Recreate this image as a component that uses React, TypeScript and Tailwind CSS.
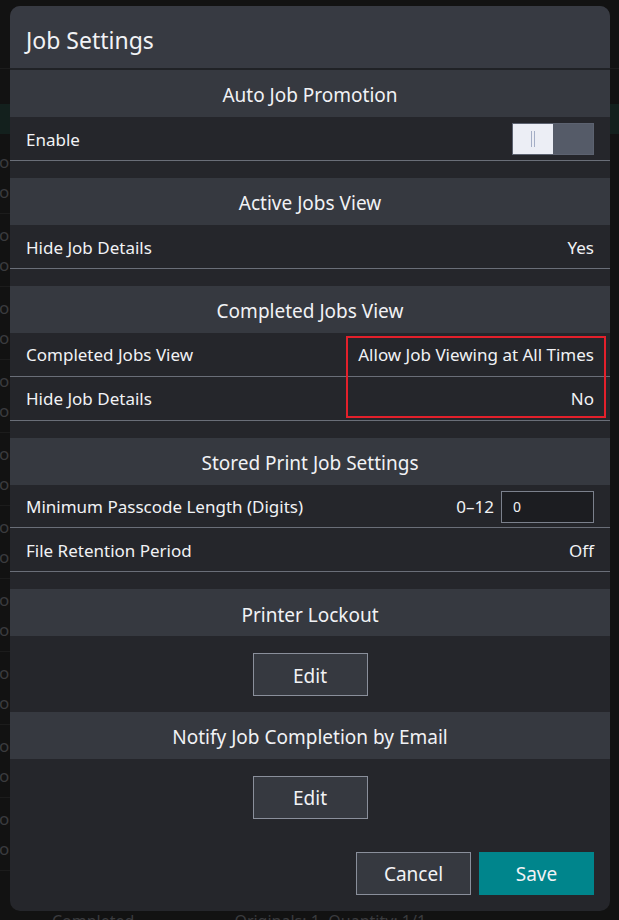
import React from "react";

const font = { fontFamily: '"Segoe UI", "Noto Sans", "Open Sans", sans-serif' };

function SectionHeader({ title }: { title: string }) {
  return (
    <div className="h-[47px] bg-[#363940] flex items-center justify-center pt-[4px] text-[19px] text-[#f1f2f5]">
      {title}
    </div>
  );
}

function Row({ label, children }: { label: string; children?: React.ReactNode }) {
  return (
    <div className="h-[44px] border-b border-[#6a6e78] px-4 flex items-center justify-between pt-[2px] text-[17px] text-[#f1f2f5]">
      <span>{label}</span>
      <div className="flex items-center">{children}</div>
    </div>
  );
}

function Spacer() {
  return <div className="h-[17px]" />;
}

function EditArea() {
  return (
    <div className="h-[76px] flex items-center justify-center">
      <button className="w-[115px] h-[43px] bg-[#363940] border border-[#8a8f9b] pt-[3px] text-[19px] text-[#f1f2f5]">
        Edit
      </button>
    </div>
  );
}

function Toggle() {
  return (
    <div className="w-[82px] h-[32px] flex border border-[#5c6270] bg-[#555b68]">
      <div className="w-[40px] h-full bg-[#eceef5] flex items-center justify-center gap-[2px]">
        <div className="w-px h-[16px] bg-[#a4aec6]" />
        <div className="w-px h-[16px] bg-[#a4aec6]" />
      </div>
    </div>
  );
}

function BgRow() {
  return (
    <div className="h-[73px] w-[10px] overflow-hidden border-b border-[#1c1c1c] flex flex-col justify-center gap-[8px] text-[17px] leading-[22px] text-[#3a3b3e]">
      <span className="block w-[10px] overflow-hidden whitespace-nowrap">
        <span className="inline-block ml-[-1px]">oc</span>
      </span>
      <span className="block w-[10px] overflow-hidden whitespace-nowrap">
        <span className="inline-block ml-[-1px]">or</span>
      </span>
    </div>
  );
}

export default function App() {
  return (
    <div className="relative w-[619px] h-[920px] overflow-hidden bg-[#121212]" style={font}>
      {/* background page */}
      <div className="flex flex-col">
        <div className="h-[69px] border-b border-[#1c1c1c]" />
        <div className="h-[35px]" />
        <div className="h-[30px] bg-[#13201d]" />
        <div className="h-[7px]" />
        <BgRow />
        <BgRow />
        <BgRow />
        <BgRow />
        <BgRow />
        <BgRow />
        <BgRow />
        <BgRow />
        <BgRow />
        <BgRow />
      </div>
      <div className="absolute left-[52px] top-[913px] w-[420px] flex text-[16px] leading-none text-[#3a3b3e] whitespace-nowrap">
        <span>Completed</span>
        <span className="ml-[100px]">Originals: 1, Quantity: 1/1</span>
      </div>

      {/* modal */}
      <div className="absolute left-[10px] top-[6px] w-[600px] h-[905px] rounded-[10px] overflow-hidden bg-[#25262b] flex flex-col">
        <div className="h-[62px] bg-[#373a42] px-4 pt-[6px] flex items-center text-[23px] text-[#f1f2f5]">
          Job Settings
        </div>
        <div className="h-[2px] bg-[#202226]" />

        <SectionHeader title="Auto Job Promotion" />
        <Row label="Enable">
          <Toggle />
        </Row>
        <Spacer />

        <SectionHeader title="Active Jobs View" />
        <Row label="Hide Job Details">
          <span>Yes</span>
        </Row>
        <Spacer />

        <SectionHeader title="Completed Jobs View" />
        <Row label="Completed Jobs View">
          <span>Allow Job Viewing at All Times</span>
        </Row>
        <Row label="Hide Job Details">
          <span>No</span>
        </Row>
        <Spacer />

        <SectionHeader title="Stored Print Job Settings" />
        <Row label="Minimum Passcode Length (Digits)">
          <span className="mr-[7px]">0–12</span>
          <div className="w-[93px] h-[32px] border border-[#7b808c] bg-[#1c1d21] flex items-center pl-[11px] text-[14px]">
            0
          </div>
        </Row>
        <Row label="File Retention Period">
          <span>Off</span>
        </Row>
        <Spacer />

        <SectionHeader title="Printer Lockout" />
        <EditArea />

        <SectionHeader title="Notify Job Completion by Email" />
        <EditArea />

        <div className="h-[76px] flex items-center justify-end gap-[8px] pr-4">
          <button className="w-[115px] h-[43px] bg-[#363940] border border-[#8a8f9b] pt-[3px] text-[19px] text-[#f1f2f5]">
            Cancel
          </button>
          <button className="w-[115px] h-[43px] bg-[#00858c] pt-[3px] text-[19px] text-[#f1f2f5]">
            Save
          </button>
        </div>

        {/* highlight */}
        <div className="absolute left-[336px] top-[330px] w-[260px] h-[82px] border-2 border-[#e3202b] pointer-events-none" />
      </div>
    </div>
  );
}
